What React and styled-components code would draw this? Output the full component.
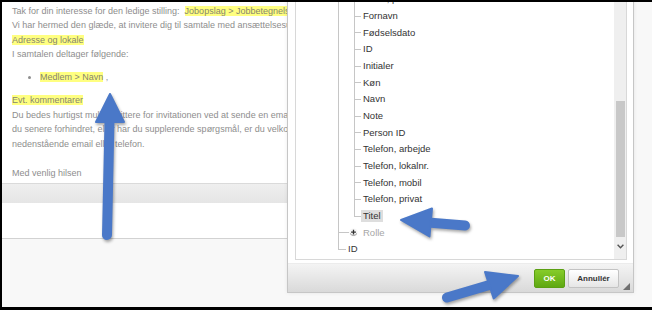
import styled, { createGlobalStyle } from "styled-components";

const GlobalStyle = createGlobalStyle`
  html, body {
    margin: 0;
    padding: 0;
    background: #fff;
  }
  body {
    font-family: "Liberation Sans", Arial, sans-serif;
  }
`;

const Shell = styled.div`
  position: relative;
  width: 652px;
  height: 310px;
  overflow: hidden;
`;

const Frame = styled.div`
  position: relative;
  box-sizing: border-box;
  width: 652px;
  height: 310px;
  border-style: solid;
  border-color: #000;
  border-width: 2px 0 3px 2px;
  background: #f8f8f8;
  overflow: hidden;
  display: flex;
`;

const PageColumn = styled.div`
  width: 285px;
  flex: none;
  display: flex;
  flex-direction: column;
`;

const Editor = styled.div`
  box-sizing: border-box;
  height: 182px;
  padding: 1.6px 0 0 10px;
  background: #fff;
  border-bottom: 1px solid #dadada;
  overflow: hidden;
  font-size: 9px;
  line-height: 14.5px;
  color: #8e8e8e;
`;

const Line = styled.div`
  white-space: nowrap;
  margin-top: ${(p) => (p.$gap ? "14.5px" : "0")};
`;

const Mark = styled.span`
  background: #ffff80;
  color: #86866e;
`;

const Bullets = styled.ul`
  margin: 8.5px 0;
  padding-left: 28px;
  list-style: disc;
  white-space: nowrap;
`;

const Toolbar = styled.div`
  height: 19px;
  background: linear-gradient(#efefef, #e5e5e5);
`;

const Strip = styled.div`
  height: 35px;
  background: #fff;
  border-bottom: 1px solid #d2d2d2;
`;

const Dialog = styled.div`
  position: absolute;
  left: 285px;
  top: -40px;
  width: 347px;
  box-sizing: border-box;
  border: 1px solid #c6c6c6;
  border-top: none;
  background: #fff;
  display: flex;
  flex-direction: column;
  box-shadow: 0 0 4px rgba(0, 0, 0, 0.08);
`;

const DialogBody = styled.div`
  padding: 0 6px 3px 7px;
`;

const Panel = styled.div`
  box-sizing: border-box;
  height: 298px;
  border: 1px solid #d8d8d8;
  display: flex;
  overflow: hidden;
  background: #fff;
`;

const TreeArea = styled.div`
  flex: 1;
  overflow: hidden;
  padding-top: 28px;
  font-size: 9.5px;
  color: #333;
`;

const Row = styled.div`
  display: flex;
  height: 16.67px;
  white-space: nowrap;
`;

const Gutter = styled.span`
  flex: none;
  width: 42px;
`;

const guideBg = ({ $v, $h }) => {
  const c = "linear-gradient(#c6c6c6, #c6c6c6)";
  const layers = [];
  if ($v) layers.push(`${c} 0 0 / 1px ${$v === "half" ? "9px" : "100%"} no-repeat`);
  if ($h) layers.push(`${c} 0 8px / 100% 1px no-repeat`);
  return layers.length ? layers.join(", ") : "none";
};

const Guide = styled.span`
  flex: none;
  width: ${(p) => p.$w}px;
  background: ${guideBg};
`;

const Label = styled.span`
  align-self: center;
  display: inline-block;
  line-height: 12px;
  padding: 0 2px;
  margin-left: ${(p) => p.$ml || 0}px;
  color: ${(p) => (p.$muted ? "#a6a6a6" : "#333")};
  background: ${(p) => (p.$selected ? "#dedede" : "transparent")};
`;

const IconBox = styled.span`
  flex: none;
  align-self: center;
  display: flex;
`;

const Scrollbar = styled.div`
  flex: none;
  width: 12px;
  display: flex;
  flex-direction: column;
  background: #efefef;
`;

const Thumb = styled.div`
  margin: ${(p) => p.$top}px 1px 0 2px;
  height: ${(p) => p.$size}px;
  background: #c8c8c8;
`;

const Track = styled.div`
  flex: 1;
`;

const ArrowButton = styled.div`
  height: 20px;
  display: flex;
  justify-content: center;
  padding-top: 5px;
  box-sizing: border-box;
`;

const Footer = styled.div`
  box-sizing: border-box;
  height: 29px;
  display: flex;
  align-items: center;
  justify-content: flex-end;
  padding-right: 3px;
  gap: 3px;
  border-top: 1px solid #ececec;
  background: linear-gradient(#f4f4f4, #d9d9d9);
`;

const Button = styled.button`
  box-sizing: border-box;
  height: 19px;
  width: ${(p) => p.$w}px;
  padding: 0;
  border-radius: 2px;
  font-family: "Liberation Sans", Arial, sans-serif;
  font-size: 8px;
  font-weight: bold;
  border: 1px solid ${(p) => (p.$primary ? "#5b9f13" : "#c3c3c3")};
  color: ${(p) => (p.$primary ? "#fff" : "#333")};
  background: ${(p) =>
    p.$primary
      ? "linear-gradient(#86cc2a, #5fa812)"
      : "linear-gradient(#ffffff, #e6e6e6)"};
`;

const Grip = styled.svg`
  flex: none;
  align-self: flex-end;
  margin: 0 0 2px 1px;
`;

const Annotations = styled.svg`
  position: absolute;
  left: 0;
  top: 0;
  pointer-events: none;
  filter: drop-shadow(1px 2px 1.5px rgba(0, 0, 0, 0.35));
`;

const fields = [
  "Email, privat",
  "Fornavn",
  "Fødselsdato",
  "ID",
  "Initialer",
  "Køn",
  "Navn",
  "Note",
  "Person ID",
  "Telefon, arbejde",
  "Telefon, lokalnr.",
  "Telefon, mobil",
  "Telefon, privat",
  "Titel",
];

function PlusIcon() {
  return (
    <svg width="9" height="9" viewBox="0 0 9 9">
      <circle cx="4.5" cy="4.5" r="4" fill="#f6f6f6" />
      <path d="M1 5.5 Q4.5 9.5 8 5.5" fill="none" stroke="#9a9a9a" strokeWidth="1" />
      <path d="M4.5 1.8 V6.6 M2.1 4.2 H6.9" stroke="#333" strokeWidth="1.3" />
    </svg>
  );
}

function Arrow({ shaft, head }) {
  const [x1, y1, x2, y2] = shaft;
  return (
    <g fill="#4a78c8" stroke="#4a78c8">
      <line x1={x1} y1={y1} x2={x2} y2={y2} strokeWidth="10" strokeLinecap="round" />
      <polygon points={head} strokeWidth="2" strokeLinejoin="round" />
    </g>
  );
}

export default function App() {
  return (
    <>
      <GlobalStyle />
      <Shell>
        <Frame>
          <PageColumn>
            <Editor>
              <Line>
                Tak for din interesse for den ledige stilling:{"\u00a0 "}
                <Mark>Jobopslag &gt; Jobbetegnelse</Mark>
              </Line>
              <Line>
                Vi har hermed den glæde, at invitere dig til samtale med ansættelsesudvalget den
              </Line>
              <Line>
                <Mark>Adresse og lokale</Mark>
              </Line>
              <Line>I samtalen deltager følgende:</Line>
              <Bullets>
                <li>
                  <Mark>Medlem &gt; Navn</Mark> ,
                </li>
              </Bullets>
              <Line>
                <Mark>Evt. kommentarer</Mark>
              </Line>
              <Line>
                Du bedes hurtigst muligt kvittere for invitationen ved at sende en email. Er
              </Line>
              <Line>
                du senere forhindret, eller har du supplerende spørgsmål, er du velkommen til
              </Line>
              <Line>nedenstående email eller telefon.</Line>
              <Line $gap>Med venlig hilsen</Line>
            </Editor>
            <Toolbar />
            <Strip />
          </PageColumn>

          <Dialog>
            <DialogBody>
              <Panel>
                <TreeArea>
                  {fields.map((f, i) => (
                    <Row key={f + i}>
                      <Gutter />
                      <Guide $w={16} $v="full" />
                      <Guide $w={7} $v={i === fields.length - 1 ? "half" : "full"} $h />
                      <Label $selected={f === "Titel"}>{f}</Label>
                    </Row>
                  ))}
                  <Row>
                    <Gutter />
                    <Guide $w={11} $v="full" $h />
                    <IconBox>
                      <PlusIcon />
                    </IconBox>
                    <Label $muted $ml={3}>
                      Rolle
                    </Label>
                  </Row>
                  <Row>
                    <Gutter />
                    <Guide $w={8} $v="half" $h />
                    <Label>ID</Label>
                  </Row>
                </TreeArea>
                <Scrollbar>
                  <Thumb $top={138} $size={136} />
                  <Track />
                  <ArrowButton>
                    <svg width="7" height="5" viewBox="0 0 7 5">
                      <path d="M0.6 0.8 L3.5 3.8 L6.4 0.8" fill="none" stroke="#555" strokeWidth="1.4" />
                    </svg>
                  </ArrowButton>
                </Scrollbar>
              </Panel>
            </DialogBody>
            <Footer>
              <Button $primary $w={31}>
                OK
              </Button>
              <Button $w={51}>Annullér</Button>
              <Grip width="7" height="7" viewBox="0 0 7 7">
                <polygon points="7,0 7,7 0,7" fill="#6f6f6f" />
              </Grip>
            </Footer>
          </Dialog>
        </Frame>

        <Annotations width="652" height="310" viewBox="0 0 652 310">
          <Arrow shaft={[107, 235, 109.5, 120]} head="110,94 96,122 124,122" />
          <Arrow shaft={[465, 225.5, 428, 222.5]} head="401,220 432,208.5 429.5,236.5" />
          <Arrow shaft={[447, 297.5, 491, 284.5]} head="518,276 485,272 493.7,298.4" />
        </Annotations>
      </Shell>
    </>
  );
}
